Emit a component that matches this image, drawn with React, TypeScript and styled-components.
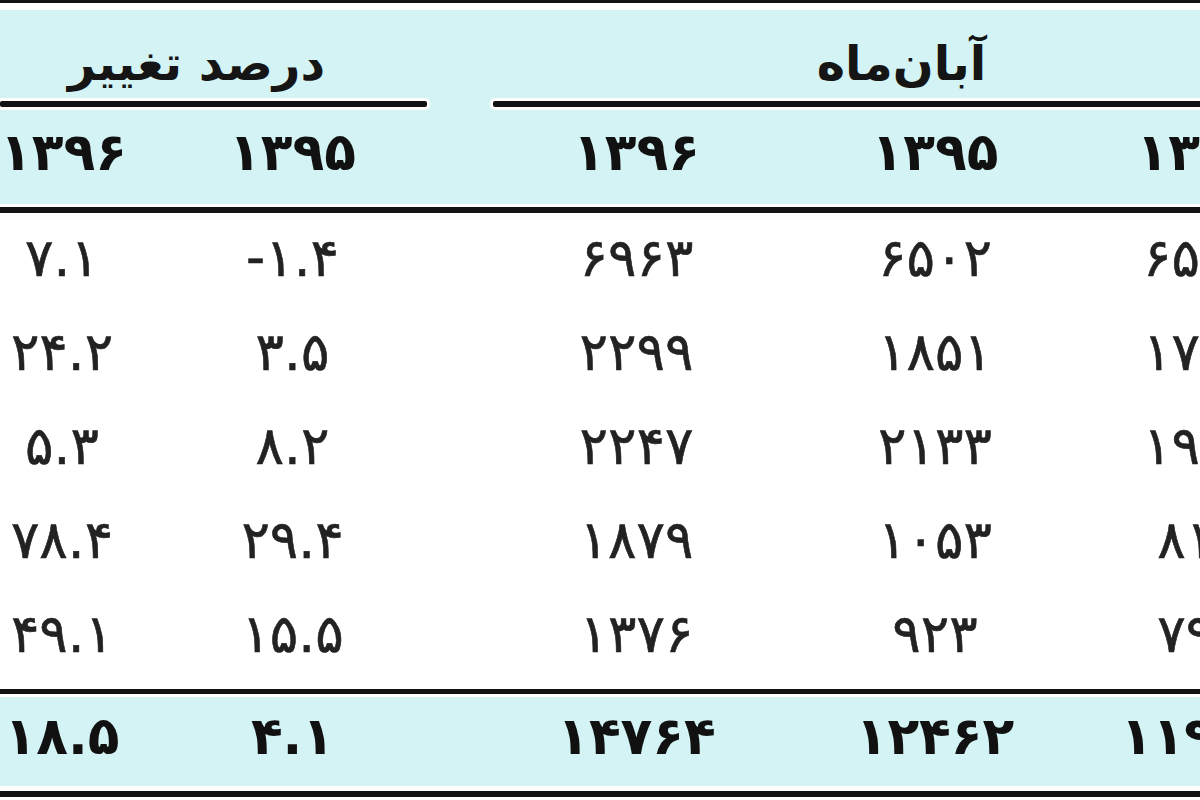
import styled, { createGlobalStyle } from "styled-components";

const GlobalStyle = createGlobalStyle`
  html, body {
    margin: 0;
    padding: 0;
    background: #ffffff;
  }
`;

const columns = "124px 303px 66px 287px 310px 220px";

const yearRow = ["۱۳۹۶", "۱۳۹۵", "۱۳۹۶", "۱۳۹۵", "۱۳۹۴"];

const bodyRows = [
  ["۷.۱", "-۱.۴", "۶۹۶۳", "۶۵۰۲", "۶۵۹۴"],
  ["۲۴.۲", "۳.۵", "۲۲۹۹", "۱۸۵۱", "۱۷۸۸"],
  ["۵.۳", "۸.۲", "۲۲۴۷", "۲۱۳۳", "۱۹۷۱"],
  ["۷۸.۴", "۲۹.۴", "۱۸۷۹", "۱۰۵۳", "۸۱۴"],
  ["۴۹.۱", "۱۵.۵", "۱۳۷۶", "۹۲۳", "۷۹۹"],
];

const totalRow = ["۱۸.۵", "۴.۱", "۱۴۷۶۴", "۱۲۴۶۲", "۱۱۹۷۱"];

const Viewport = styled.div`
  width: 1200px;
  height: 800px;
  overflow: hidden;
  background: #ffffff;
  font-family: "DejaVu Sans", sans-serif;
  color: #1a1a1a;
`;

const Sheet = styled.div`
  width: 1310px;
`;

const Rule = styled.div<{ $h: number; $gap: number }>`
  height: ${(p) => p.$h}px;
  background: #121212;
  margin: ${(p) => p.$gap}px 0;
`;

const TopRule = styled.div`
  height: 3px;
  background: #121212;
  margin-bottom: 7px;
`;

const Band = styled.div`
  background: #d3f3f5;
`;

const Row = styled.div<{ $h: number }>`
  display: grid;
  grid-template-columns: ${columns};
  align-items: center;
  height: ${(p) => p.$h}px;
`;

const GroupTitle = styled.div<{ $span: string }>`
  grid-column: ${(p) => p.$span};
  align-self: end;
  text-align: center;
  direction: rtl;
  font-size: 48px;
  font-weight: bold;
  line-height: 1;
  padding-bottom: 10px;
  color: #151515;
`;

const GroupTitleLeft = styled(GroupTitle)`
  padding-right: 34px;
`;

const Segment = styled.div<{ $span: string }>`
  grid-column: ${(p) => p.$span};
  height: 6px;
  background: #121212;
  box-shadow: 0 0 0 3px #ffffff;
  border-radius: 2px;
`;

const Cell = styled.div<{ $col: number; $bold?: boolean; $shift?: number }>`
  grid-column: ${(p) => p.$col};
  text-align: center;
  direction: ltr;
  font-size: ${(p) => (p.$bold ? 52 : 53)}px;
  font-weight: ${(p) => (p.$bold ? "bold" : "normal")};
  color: ${(p) => (p.$bold ? "#111" : "#222")};
  -webkit-text-stroke: ${(p) => (p.$bold ? 0 : 0.6)}px #222;
  line-height: 1;
  padding-left: ${(p) => p.$shift ?? 0}px;
  padding-bottom: 12px;
`;

// grid columns skip the gap column (3) between the two groups
const colOf = [1, 2, 4, 5, 6];

const Cells = ({ values, bold }: { values: string[]; bold?: boolean }) => (
  <>
    {values.map((v, i) => (
      <Cell key={i} $col={colOf[i]} $bold={bold} $shift={i === 1 ? 34 : 0}>
        {v}
      </Cell>
    ))}
  </>
);

const App = () => {
  return (
    <Viewport>
      <GlobalStyle />
      <Sheet>
        <TopRule />
        <Band>
          <Row $h={87}>
            <GroupTitleLeft $span="1 / 3">درصد تغییر</GroupTitleLeft>
            <GroupTitle $span="4 / 7">آبان‌ماه</GroupTitle>
          </Row>
          <Row $h={14}>
            <Segment $span="1 / 3" />
            <Segment $span="4 / 7" />
          </Row>
          <Row $h={93}>
            <Cells values={yearRow} bold />
          </Row>
        </Band>
        <Rule $h={6} $gap={3} />
        {bodyRows.map((r, i) => (
          <Row key={i} $h={94}>
            <Cells values={r} />
          </Row>
        ))}
        <Rule $h={5} $gap={3} />
        <Band>
          <Row $h={89}>
            <Cells values={totalRow} bold />
          </Row>
        </Band>
        <Rule $h={6} $gap={5} />
      </Sheet>
    </Viewport>
  );
};

export default App;
